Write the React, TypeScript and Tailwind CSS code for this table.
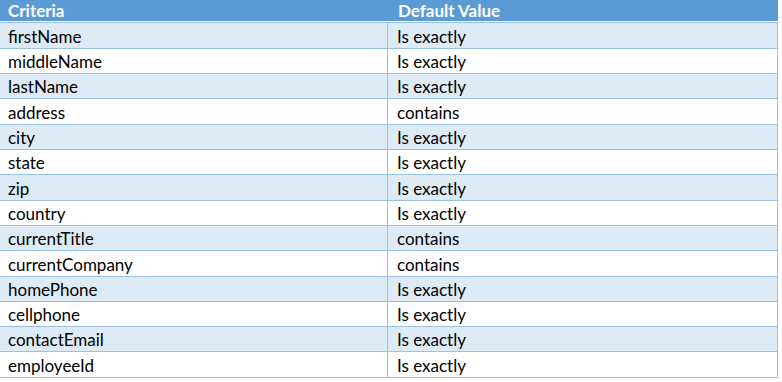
const rows = [
  { name: 'firstName', value: 'Is exactly', h: 'h-[26px]' },
  { name: 'middleName', value: 'Is exactly', h: 'h-[25px]' },
  { name: 'lastName', value: 'Is exactly', h: 'h-[25px]' },
  { name: 'address', value: 'contains', h: 'h-[26px]' },
  { name: 'city', value: 'Is exactly', h: 'h-[25px]' },
  { name: 'state', value: 'Is exactly', h: 'h-[25px]' },
  { name: 'zip', value: 'Is exactly', h: 'h-[26px]' },
  { name: 'country', value: 'Is exactly', h: 'h-[25px]' },
  { name: 'currentTitle', value: 'contains', h: 'h-[25px]' },
  { name: 'currentCompany', value: 'contains', h: 'h-[26px]' },
  { name: 'homePhone', value: 'Is exactly', h: 'h-[25px]' },
  { name: 'cellphone', value: 'Is exactly', h: 'h-[25px]' },
  { name: 'contactEmail', value: 'Is exactly', h: 'h-[25px]' },
  { name: 'employeeId', value: 'Is exactly', h: 'h-[26px]' },
];

const App = () => {
  return (
    <div className="w-[782px] h-[382px] bg-white overflow-hidden font-['Lato','Liberation_Sans',sans-serif] text-[17px] text-black">
      <div className="w-[778px]">
        <div className="h-[21px] bg-[#5b9bd5] flex items-center font-bold text-white">
          <div className="w-[388px] pl-[8px]">Criteria</div>
          <div className="flex-1 pl-[10px]">Default Value</div>
        </div>
        <div className="h-px bg-white" />
        <div className="border-t border-r border-[#9bc2e6]">
          {rows.map((r, i) => (
            <div
              key={r.name}
              className={`${r.h} flex border-b border-[#9bc2e6] ${i % 2 === 0 ? 'bg-[#ddebf7]' : 'bg-white'}`}
            >
              <div className="w-[388px] border-r border-[#9bc2e6] pl-[8px] pt-[2px] flex items-center">{r.name}</div>
              <div className="flex-1 pl-[9px] pt-[2px] flex items-center">{r.value}</div>
            </div>
          ))}
        </div>
      </div>
    </div>
  );
};

export default App;
